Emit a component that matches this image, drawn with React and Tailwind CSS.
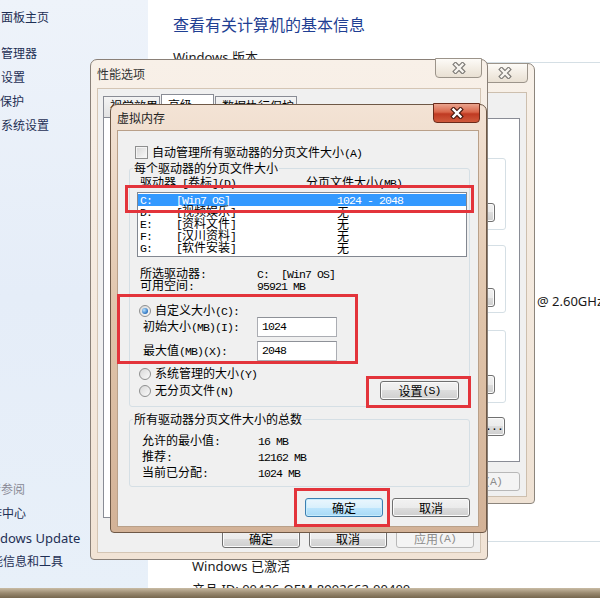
import React from "react";

function T({ s }) {
  const parts = s.split(/([\x20-\x7e]+)/);
  return (
    <>
      {parts.map((p, i) =>
        i % 2 === 1 ? (
          <span
            key={i}
            className="font-['Liberation_Mono',monospace] text-[11.5px] tracking-[-0.9px] whitespace-pre"
          >
            {p}
          </span>
        ) : (
          <React.Fragment key={i}>{p}</React.Fragment>
        )
      )}
    </>
  );
}

function CloseX({ active }) {
  const d = "M3.5 2.5 L10.5 9.5 M10.5 2.5 L3.5 9.5";
  return (
    <svg width="14" height="12" viewBox="0 0 14 12">
      <path d={d} stroke={active ? "#4a1b10" : "#7d7a76"} strokeWidth="4.6" strokeLinecap="square" fill="none" />
      <path d={d} stroke={active ? "#ffffff" : "#f8f5f0"} strokeWidth="2.4" strokeLinecap="square" fill="none" />
    </svg>
  );
}

function CloseBtn({ active, className }) {
  return (
    <div
      className={
        "absolute flex items-center justify-center rounded-b-[4px] border " +
        (active
          ? "border-[#6b2a1a] bg-[linear-gradient(180deg,#eaa48e_0%,#d9664a_45%,#bf3a22_55%,#d05a3c_100%)] "
          : "border-[#9c948a] bg-[linear-gradient(180deg,#fdfbf7_0%,#f3ede4_50%,#e9e0d3_100%)] ") +
        className
      }
    >
      <CloseX active={active} />
    </div>
  );
}

function Btn({ children, className = "", kind = "normal" }) {
  const look =
    kind === "default"
      ? "border-[#3c7fb1] bg-[linear-gradient(180deg,#eaf6fd_0%,#d9f0fc_50%,#bee6fd_50%,#a7d9f5_100%)] shadow-[inset_0_0_0_1px_#c8ecfc] text-black"
      : kind === "disabled"
      ? "border-[#b8b8b8] bg-[#f4f4f4] text-[#8d8d8d]"
      : "border-[#707070] bg-[linear-gradient(180deg,#f2f2f2_0%,#ebebeb_50%,#dddddd_50%,#cfcfcf_100%)] shadow-[inset_0_0_0_1px_#fbfbfb] text-black";
  return (
    <div
      className={
        "flex h-[19px] w-[78px] shrink-0 items-center justify-center rounded-[3px] border leading-[12px] " +
        look +
        " " +
        className
      }
    >
      {children}
    </div>
  );
}

function Radio({ on }) {
  return (
    <div className="flex h-[12px] w-[12px] shrink-0 items-center justify-center rounded-full border border-[#8e8f8f] bg-linear-to-br from-[#d8d8d8] to-[#fbfbfb]">
      {on && (
        <div className="h-[6px] w-[6px] rounded-full bg-[radial-gradient(circle_at_35%_35%,#b8e2ff,#2b73c0_70%,#174f8f)]" />
      )}
    </div>
  );
}

function Group({ label, className = "", children }) {
  return (
    <div className={"relative rounded-[3px] border border-[#d5dfe5] flex flex-col " + className}>
      <div className="absolute left-[3px] top-[-7px] bg-[#f0f0f0] px-[1px] leading-[12px]">
        <T s={label} />
      </div>
      {children}
    </div>
  );
}

function Red({ className }) {
  return <div className={"pointer-events-none absolute border-[3px] border-[#e3343b] " + className} />;
}

const drives = [
  ["C:", "[Win7 OS]", "1024 - 2048"],
  ["D:", "[视频娱乐]", "无"],
  ["E:", "[资料文件]", "无"],
  ["F:", "[汉川资料]", "无"],
  ["G:", "[软件安装]", "无"],
];

export default function App() {
  return (
    <div className="relative flex h-[598px] w-[600px] flex-col overflow-hidden bg-white font-['Noto_Sans','Noto_Sans_CJK_SC',sans-serif]">
      {/* Control panel page */}
      <div className="flex h-[588px] overflow-hidden">
        <aside className="flex w-[148px] shrink-0 flex-col bg-linear-to-b from-[#eef3fa] via-[#e5edf8] to-[#e8f0f9] text-[12px] text-[#1e2f55]">
          <div className="mt-[6px] h-[24px] pl-[1px] leading-[24px]">面板主页</div>
          <div className="mt-[12px] h-[24px] pl-[1px] leading-[24px]">管理器</div>
          <div className="h-[24px] pl-[1px] leading-[24px]">设置</div>
          <div className="h-[24px] leading-[24px]">保护</div>
          <div className="h-[24px] pl-[1px] leading-[24px]">系统设置</div>
          <div className="mt-[340px] ml-[-23px] h-[24px] leading-[24px] text-[#8a8a96]">另请参阅</div>
          <div className="ml-[-22px] h-[24px] leading-[24px]">操作中心</div>
          <div className="h-[24px] text-[13px] leading-[24px]">dows Update</div>
          <div className="ml-[-21px] h-[24px] leading-[24px]">性能信息和工具</div>
        </aside>
        <main className="flex min-w-0 flex-1 flex-col pl-[25px] text-[13px] text-[#1a1a1a]">
          <div className="mt-[15px] h-[20px] whitespace-nowrap text-[16px] leading-[20px] text-[#1f3f93]">
            查看有关计算机的基本信息
          </div>
          <div className="mt-[14px] flex h-[16px] items-start leading-[16px]">
            <span className="whitespace-nowrap">Windows 版本</span>
            <div className="ml-[8px] mt-[13px] h-px flex-1 bg-[#d5dfe5]" />
          </div>
          <div className="mt-[228px] flex h-[16px] whitespace-nowrap leading-[16px]">
            <span className="w-[100px] shrink-0">处理器:</span>
            <span className="w-[264px] shrink-0 overflow-hidden">Intel(R) Core(TM) i5-3230M CPU</span>
            <span>@ 2.60GHz</span>
          </div>
          <div className="mt-[219px] flex h-[16px] items-start leading-[16px]">
            <span className="whitespace-nowrap">Windows 激活</span>
            <div className="ml-[8px] mt-[13px] h-px flex-1 bg-[#d5dfe5]" />
          </div>
          <div className="ml-[19px] mt-[14px] h-[16px] whitespace-nowrap leading-[16px]">Windows 已激活</div>
          <div className="ml-[19px] mt-[7px] h-[16px] whitespace-nowrap leading-[16px]">
            产品 ID: 00426-OEM-8992662-00400
          </div>
        </main>
      </div>
      <div className="h-[10px] bg-linear-to-b from-[#c9bca5] via-[#9a8a70] to-[#76674f]" />

      {/* 系统属性 (behind) */}
      <div className="absolute left-[100px] top-[63px] flex h-[441px] w-[435px] flex-col rounded-t-[7px] rounded-b-[4px] border border-[#8c857c] bg-linear-to-b from-[#f8f1e9] to-[#efe2d4] font-['Noto_Sans_CJK_SC',sans-serif] text-[12px] leading-[12px]">
        <div className="flex h-[28px] items-center pl-[6px] text-[#333]">系统属性</div>
        <CloseBtn active={false} className="right-[6px] top-[-1px] h-[20px] w-[47px]" />
        <div className="ml-[6px] flex h-[405px] w-[420px] flex-col bg-[#f0f0f0] shadow-[inset_0_0_0_1px_#cdbfae]">
          <div className="flex h-[26px] items-end pl-[6px]">
            <div className="flex h-[21px] w-[60px] items-center justify-center border border-b-0 border-[#898c95] bg-linear-to-b from-[#f2f2f2] to-[#e3e3e3]">计算机名</div>
            <div className="ml-[1px] flex h-[21px] w-[40px] items-center justify-center border border-b-0 border-[#898c95] bg-linear-to-b from-[#f2f2f2] to-[#e3e3e3]">硬件</div>
            <div className="ml-[1px] flex h-[23px] w-[42px] items-center justify-center border border-b-0 border-[#898c95] bg-white">高级</div>
          </div>
          <div className="ml-[6px] flex h-[344px] w-[407px] flex-col border border-[#898c95] bg-white px-[13px]">
            <div className="mt-[10px] h-[12px] whitespace-nowrap">要进行大多数更改，您必须作为管理员登录。</div>
            <Group label="性能" className="mt-[17px] h-[72px] [&>div:first-child]:bg-white">
              <div className="mt-[14px] pl-[10px]">视觉效果，处理器计划，内存使用，以及虚拟内存</div>
              <Btn className="mr-[10px] mt-[18px] self-end w-[75px]"><T s="设置(S)..." /></Btn>
            </Group>
            <Group label="用户配置文件" className="mt-[15px] h-[68px] [&>div:first-child]:bg-white">
              <div className="mt-[14px] pl-[10px]">与您登录有关的桌面设置</div>
              <Btn className="mr-[10px] mt-[16px] self-end w-[75px]"><T s="设置(E)..." /></Btn>
            </Group>
            <Group label="启动和故障恢复" className="mt-[17px] h-[73px] [&>div:first-child]:bg-white">
              <div className="mt-[14px] pl-[10px]">系统启动、系统失败和调试信息</div>
              <Btn className="mr-[10px] mt-[18px] self-end w-[75px]"><T s="设置(T)..." /></Btn>
            </Group>
            <Btn className="mr-[1px] mt-[14px] self-end w-[88px]"><T s="环境变量(N)..." /></Btn>
          </div>
          <div className="mt-[10px] flex justify-end gap-[9px] pr-[7px]">
            <Btn>确定</Btn>
            <Btn>取消</Btn>
            <Btn kind="disabled"><T s="应用(A)" /></Btn>
          </div>
        </div>
      </div>

      {/* 性能选项 */}
      <div className="absolute left-[90px] top-[59px] flex h-[501px] w-[398px] flex-col rounded-t-[7px] rounded-b-[4px] border border-[#8a8078] bg-linear-to-b from-[#f8f0e8] to-[#f1e3d5] font-['Noto_Sans_CJK_SC',sans-serif] text-[12px] leading-[12px]">
        <div className="flex h-[28px] items-center pl-[6px] text-[#333]">性能选项</div>
        <CloseBtn active={false} className="right-[5px] top-[-2px] h-[20px] w-[47px]" />
        <div className="ml-[6px] flex h-[465px] w-[384px] flex-col bg-[#f0f0f0] shadow-[inset_0_0_0_1px_#d4c5b4]">
          <div className="flex h-[29px] items-end pl-[6px]">
            <div className="flex h-[21px] w-[57px] items-start border border-b-0 border-[#898c95] bg-linear-to-b from-[#f4f4f4] to-[#e2e2e2] pl-[6px] pt-[3px]">视觉效果</div>
            <div className="ml-[1px] flex h-[23px] w-[53px] items-start border border-b-0 border-[#898c95] bg-white pl-[6px] pt-[4px]">高级</div>
            <div className="ml-[1px] flex h-[21px] w-[82px] items-start border border-b-0 border-[#898c95] bg-linear-to-b from-[#f4f4f4] to-[#e2e2e2] pl-[6px] pt-[3px]">数据执行保护</div>
          </div>
          <div className="ml-[6px] h-[401px] w-[372px] border border-[#898c95] bg-white" />
          <div className="mt-[11px] flex justify-end gap-[9px] pr-[7px]">
            <Btn>确定</Btn>
            <Btn>取消</Btn>
            <Btn kind="disabled"><T s="应用(A)" /></Btn>
          </div>
        </div>
      </div>

      {/* 虚拟内存 */}
      <div className="absolute left-[110px] top-[104px] flex h-[429px] w-[377px] flex-col rounded-t-[7px] rounded-b-[4px] border border-[#6e5846] bg-linear-to-b from-[#f3e3d5] via-[#e0c4aa] to-[#d3b297] font-['Noto_Sans_CJK_SC',sans-serif] text-[12px] leading-[12px] text-black">
        <div className="flex h-[25px] items-center pl-[6px] text-[#222]">虚拟内存</div>
        <CloseBtn active className="right-[6px] top-[-2px] h-[20px] w-[47px]" />
        <div className="relative ml-[6px] flex h-[397px] w-[362px] flex-col bg-[#f0f0f0] shadow-[inset_0_0_0_1px_#b9a089]">
          <div className="ml-[18px] mt-[16px] flex h-[13px] items-center gap-[4px]">
            <div className="h-[13px] w-[13px] shrink-0 border border-[#8e8f8f] bg-linear-to-br from-[#d6d6d6] to-[#fafafa] shadow-[inset_0_0_0_1px_#f4f4f4]" />
            <span className="whitespace-nowrap"><T s="自动管理所有驱动器的分页文件大小(A)" /></span>
          </div>

          <Group label="每个驱动器的分页文件大小" className="ml-[12px] mt-[9px] h-[239px] w-[341px]">
            <div className="mt-[8px] flex h-[12px] items-center pl-[10px] whitespace-nowrap">
              <span className="w-[166px] shrink-0"><T s="驱动器 [卷标](D)" /></span>
              <span><T s="分页文件大小(MB)" /></span>
            </div>
            <div className="ml-[7px] mt-[3px] flex h-[65px] w-[330px] flex-col border border-[#828790] bg-white pt-[1px]">
              {drives.map((d, i) => (
                <div
                  key={d[0]}
                  className={
                    "flex h-[12px] items-center pl-[2px] whitespace-nowrap " +
                    (i === 0 ? "bg-[#3399ff] text-white" : "")
                  }
                >
                  <span className="w-[36px] shrink-0"><T s={d[0]} /></span>
                  <span className="w-[161px] shrink-0"><T s={d[1]} /></span>
                  <span><T s={d[2]} /></span>
                </div>
              ))}
            </div>
            <div className="mt-[11px] flex h-[12px] items-center pl-[10px] whitespace-nowrap">
              <span className="w-[117px] shrink-0"><T s="所选驱动器:" /></span>
              <span><T s="C:  [Win7 OS]" /></span>
            </div>
            <div className="flex h-[12px] items-center pl-[10px] whitespace-nowrap">
              <span className="w-[117px] shrink-0"><T s="可用空间:" /></span>
              <span><T s="95921 MB" /></span>
            </div>
            <div className="mt-[13px] flex h-[12px] items-center gap-[4px] pl-[9px] whitespace-nowrap">
              <Radio on />
              <span><T s="自定义大小(C):" /></span>
            </div>
            <div className="flex h-[20px] items-center pl-[13px] whitespace-nowrap">
              <span className="w-[114px] shrink-0"><T s="初始大小(MB)(I):" /></span>
              <div className="flex h-[20px] w-[80px] items-center border border-[#abadb3] border-t-[#8e9198] bg-white pl-[4px]"><T s="1024" /></div>
            </div>
            <div className="mt-[4px] flex h-[20px] items-center pl-[13px] whitespace-nowrap">
              <span className="w-[114px] shrink-0"><T s="最大值(MB)(X):" /></span>
              <div className="flex h-[20px] w-[80px] items-center border border-[#abadb3] border-t-[#8e9198] bg-white pl-[4px]"><T s="2048" /></div>
            </div>
            <div className="mt-[7px] flex items-start">
              <div className="flex flex-col pl-[9px] whitespace-nowrap">
                <div className="flex h-[12px] items-center gap-[4px]">
                  <Radio />
                  <span><T s="系统管理的大小(Y)" /></span>
                </div>
                <div className="mt-[5px] flex h-[12px] items-center gap-[4px]">
                  <Radio />
                  <span><T s="无分页文件(N)" /></span>
                </div>
              </div>
              <Btn className="ml-auto mr-[10px] mt-[13px] w-[79px]"><T s="设置(S)" /></Btn>
            </div>
          </Group>

          <Group label="所有驱动器分页文件大小的总数" className="ml-[12px] mt-[12px] h-[68px] w-[341px]">
            <div className="flex flex-col pl-[12px] pt-[13px] whitespace-nowrap">
              <div className="flex h-[16px] items-center">
                <span className="w-[116px] shrink-0"><T s="允许的最小值:" /></span>
                <span><T s="16 MB" /></span>
              </div>
              <div className="flex h-[16px] items-center">
                <span className="w-[116px] shrink-0"><T s="推荐:" /></span>
                <span><T s="12162 MB" /></span>
              </div>
              <div className="flex h-[16px] items-center">
                <span className="w-[116px] shrink-0"><T s="当前已分配:" /></span>
                <span><T s="1024 MB" /></span>
              </div>
            </div>
          </Group>

          <div className="mt-[11px] flex justify-end gap-[9px] pr-[9px]">
            <Btn kind="default">确定</Btn>
            <Btn>取消</Btn>
          </div>

          <Red className="left-[8px] top-[55px] h-[28px] w-[349px]" />
          <Red className="left-0 top-[164px] h-[70px] w-[241px]" />
          <Red className="left-[249px] top-[246px] h-[32px] w-[105px]" />
          <Red className="left-[177px] top-[358px] h-[39px] w-[96px]" />
        </div>
      </div>
    </div>
  );
}
